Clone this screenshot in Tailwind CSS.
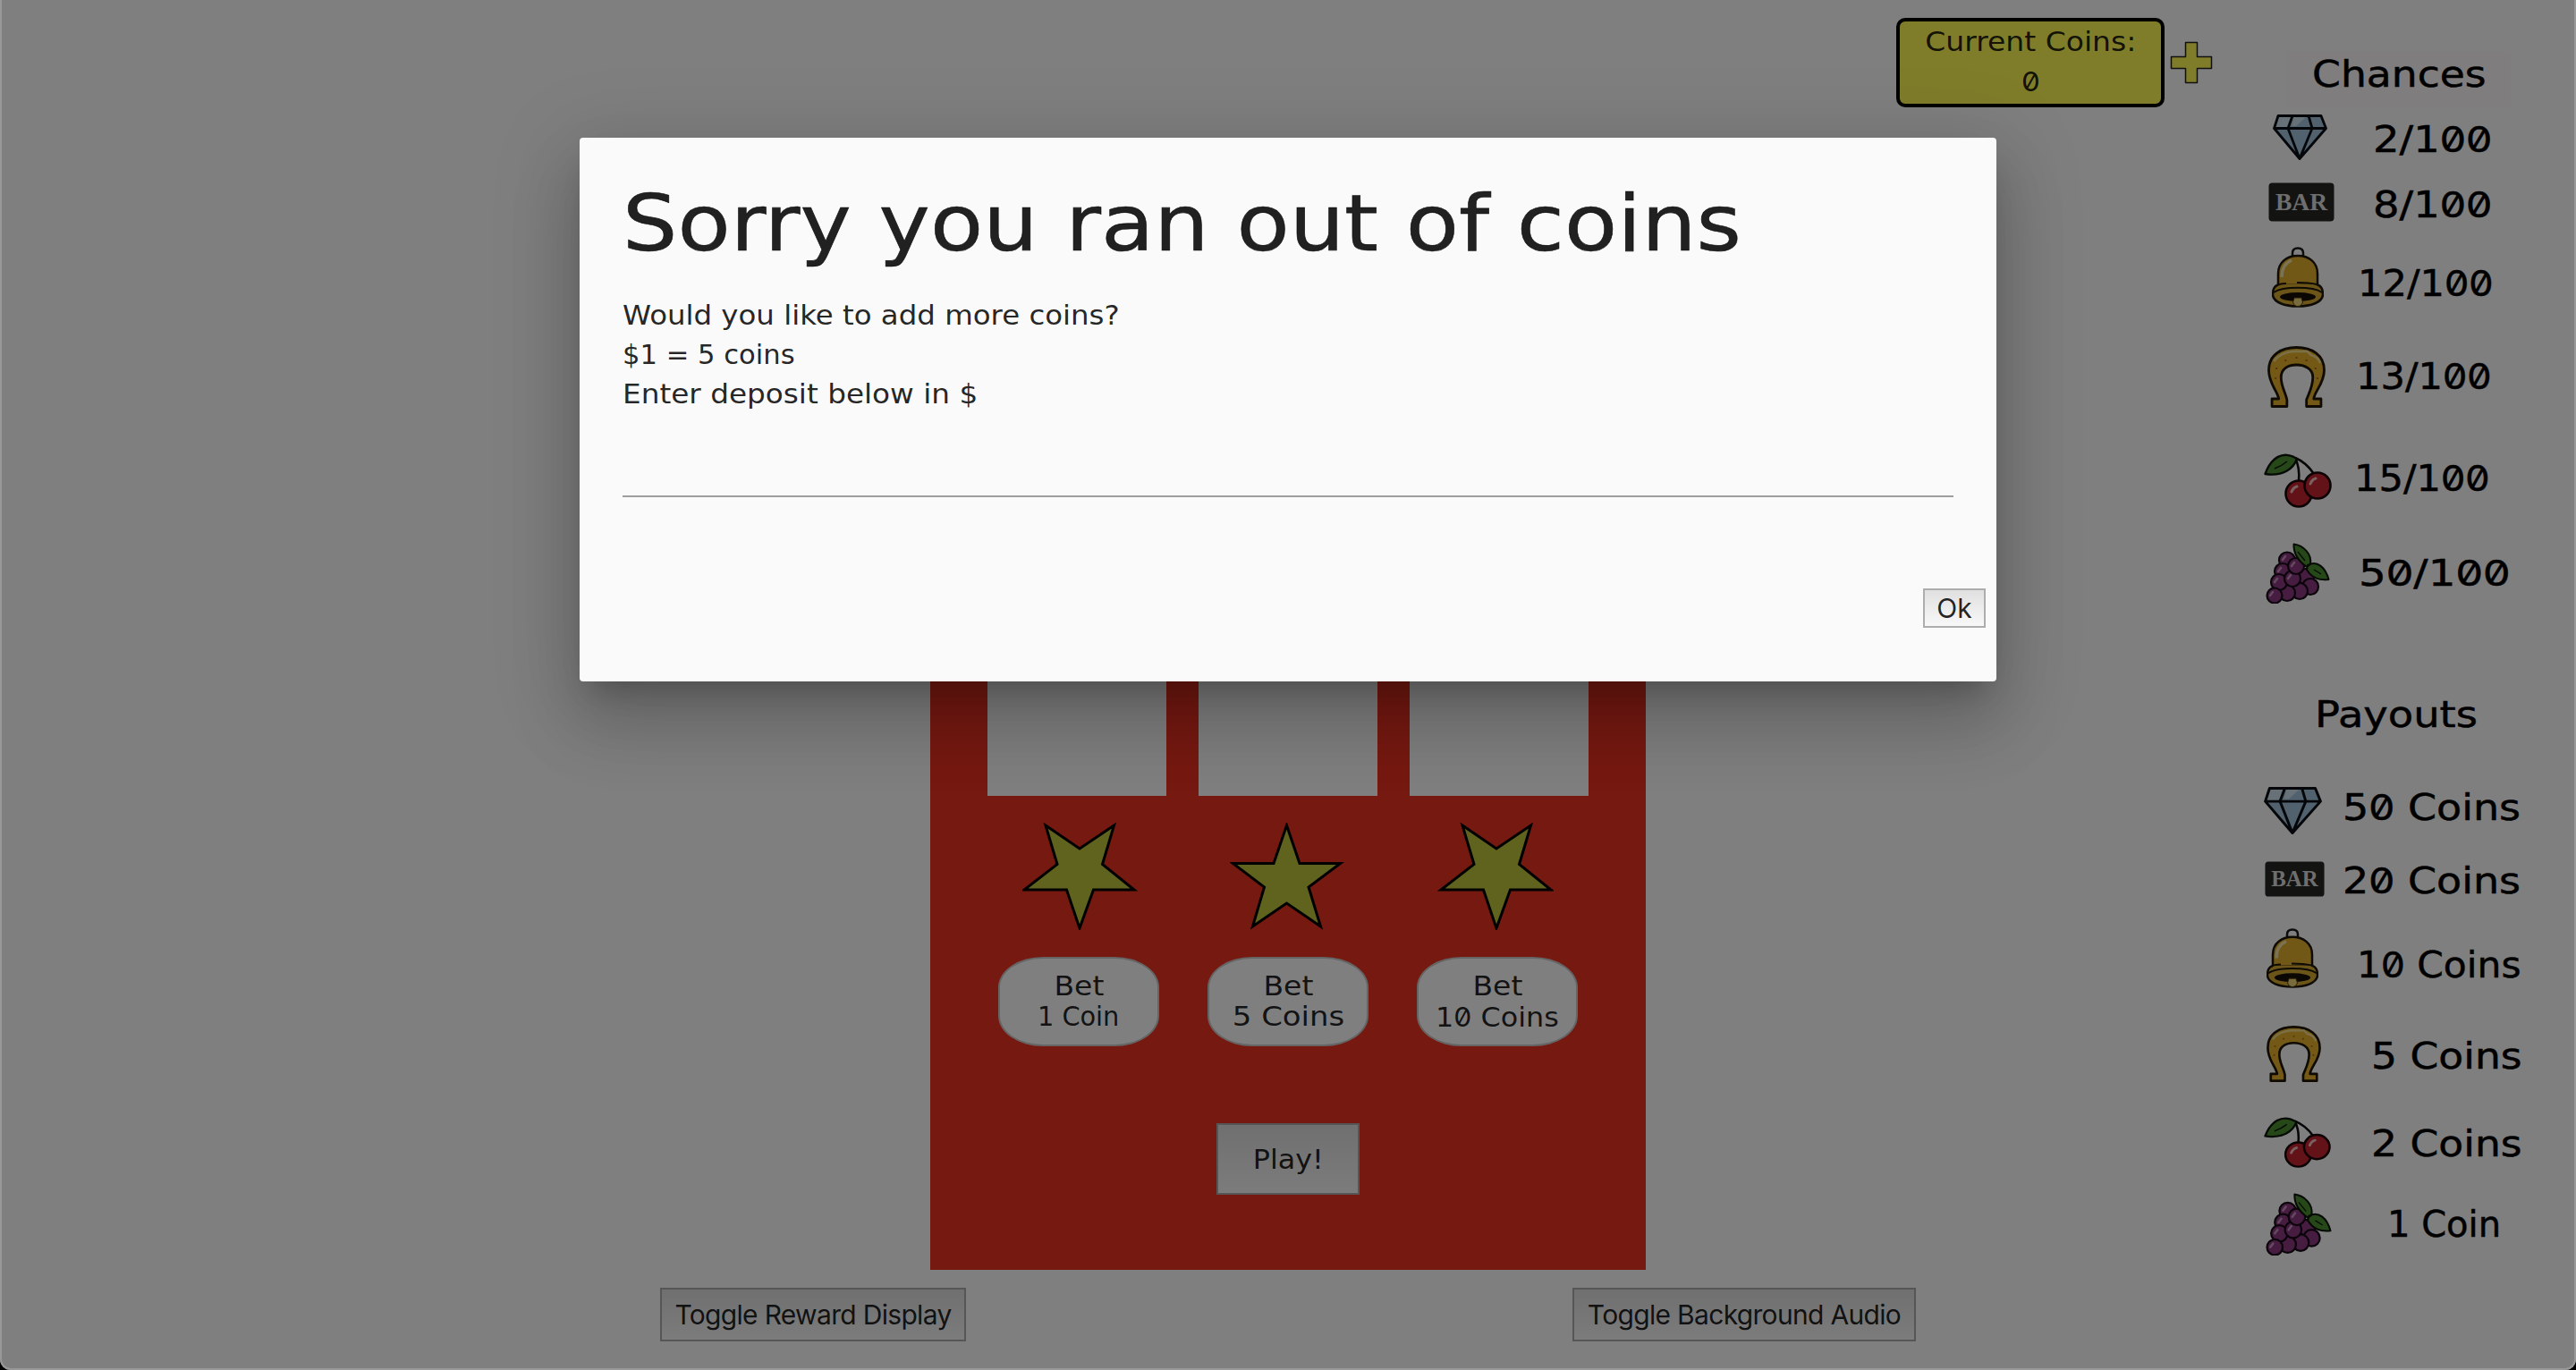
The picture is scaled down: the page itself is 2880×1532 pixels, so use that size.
<!DOCTYPE html>
<html lang="en">
<head>
<meta charset="utf-8">
<title>Slot Machine</title>
<script src="https://cdn.jsdelivr.net/npm/@tailwindcss/browser@4"></script>
</head>
<body class="bg-black">
<svg class="hidden">
  <symbol id="diamond" viewBox="0 0 61 51" preserveAspectRatio="none">
    <path d="M6 1.500H54L59.500 15.500 30 49.500 1.500 15.500Z" fill="#a3c3db"/>
    <path d="M6 2H22L17 15H2ZM24 2H38L26 13H21Z" fill="#cfe2ee"/>
    <path d="M6 1.500H54L59.500 15.500 30 49.500 1.500 15.500ZM1.500 15.500H59.500M22 1.500L17 15.500 30 49.500 44 15.500 40 1.500" fill="none" stroke="#080d12" stroke-width="2.800" stroke-linejoin="round"/>
  </symbol>
  <symbol id="bar" viewBox="0 0 74 44" preserveAspectRatio="none">
    <rect x=".5" y=".5" width="73" height="43" rx="4" fill="#262624"/>
    <text x="8" y="31" font-family="Liberation Serif, serif" font-weight="700" font-size="27" textLength="58" lengthAdjust="spacingAndGlyphs" fill="#dcdcdc">BAR</text>
  </symbol>
  <symbol id="bell" viewBox="0 0 58 68" preserveAspectRatio="none">
    <path d="M23 11V7Q23 1.500 29 1.500T35 7V11" fill="none" stroke="#1c1a1c" stroke-width="2.500"/>
    <path d="M7 43V30C7 17 17 10 29 10S51 17 51 30V43Z" fill="#e2b02c" stroke="#1c1408" stroke-width="2.500"/>
    <path d="M11 34C11 24 15 18 22 15" fill="none" stroke="#f7e7a6" stroke-width="3.500"/>
    <path d="M8 42C2 44 1 48 1 54C2 62 14 66.500 29 66.500S56 62 57 54C57 48 56 44 50 42" fill="#d9ab30" stroke="#1c1408" stroke-width="2.500"/>
    <path d="M8 42C12 41 13 41 16 41M28 40Q42 40 50 42M2 51C12 44 46 44 56 51" fill="none" stroke="#1c1408" stroke-width="2"/>
    <ellipse cx="29" cy="56" rx="20" ry="5" fill="#170f04"/>
    <path d="M25 57H33L34.500 62Q33 66.500 29 66.500T23.500 62Z" fill="#f1d67a" stroke="#4a370a" stroke-width="1"/>
  </symbol>
  <symbol id="shoe" viewBox="0 0 64 69" preserveAspectRatio="none">
    <path d="M5 59H12.500C11 50 1.500 42 1.500 27C1.500 10 15 1.500 32 1.500S62.500 10 62.500 27C62.500 42 52 50 51 59H59V67.500H43V60C46 52 50 45 50 35C50 26 42 21 32 21S15 26 15 35C15 45 20 52 21.500 60V67.500H5Z" fill="#e6b32a" stroke="#1f1606" stroke-width="2.800" stroke-linejoin="round"/>
    <path d="M7 17Q14 7 29 6H44L48 10Q56 12 58 19" fill="none" stroke="#f6df8e" stroke-width="2.500"/>
    <path d="M20 15V17M32 12V14M43 15V17M10 24V26M53 24V26M8 36H10M54 36H56" stroke="#b06a1c" stroke-width="2"/>
  </symbol>
  <symbol id="cherry" viewBox="0 0 76 62" preserveAspectRatio="none">
    <path d="M35 6C38 12 40 22 39 32M35 6C45 10 52 18 56 24" fill="none" stroke="#0d0d0d" stroke-width="2.600"/>
    <path d="M1.500 24C7 8 20-4 37 7C33 18 22 27 1.500 24Z" fill="#4d8f2e" stroke="#0d140a" stroke-width="2.400" stroke-linejoin="round"/>
    <path d="M12 18Q20 15 26 10" fill="none" stroke="#0d140a" stroke-width="1.500"/>
    <circle cx="39" cy="46" r="14.500" fill="#c62430" stroke="#190506" stroke-width="2.600"/>
    <circle cx="60" cy="37" r="14.500" fill="#c62430" stroke="#190506" stroke-width="2.600"/>
    <path d="M31 44Q33 39 37 38M52 35Q54 30 58 29" fill="none" stroke="#f3c2c4" stroke-width="3" stroke-linecap="round"/>
  </symbol>
  <symbol id="grapes" viewBox="0 0 72 68" preserveAspectRatio="none">
    <g fill="#8c3a80" stroke="#160a16" stroke-width="2.200">
      <circle cx="45" cy="38" r="9"/><circle cx="50" cy="49" r="9"/><circle cx="24" cy="19.500" r="9"/><circle cx="38" cy="54" r="9"/><circle cx="24" cy="56" r="9"/><circle cx="19" cy="32" r="9"/><circle cx="15" cy="44" r="9"/><circle cx="10" cy="59" r="8.500"/><circle cx="30" cy="40" r="9"/><circle cx="34" cy="26" r="9"/>
    </g>
    <g fill="none" stroke="#c993c0" stroke-width="2.500" stroke-linecap="round">
      <path d="M19 19L22 15M29 26L32 22M14 32L17 28M10 44L13 40M25 40L28 36M5 59L8 55"/>
    </g>
    <path d="M31.500 1.500C42 3 52 12 50 24L46 27C36 20 31 12 31.500 1.500ZM47 25C58 19 67 28 70.500 41C60 42 52 40 46 30Z" fill="#4d8f2e" stroke="#0d140a" stroke-width="2" stroke-linejoin="round"/>
    <path d="M36 10L44 20M54 30L62 35" stroke="#0d140a" stroke-width="1.300"/>
  </symbol>
</svg>

<div class="relative flex h-[1532px] w-[2880px] overflow-hidden rounded-b-[12px] bg-white font-['DejaVu_Sans',sans-serif] text-black/87">
  <main class="flex w-[2142px] shrink-0 flex-col pt-[180px] pl-[738px]">
    <section class="mx-auto flex h-[1240px] w-[800px] flex-col items-center bg-[#ec3222]">
      <div class="flex gap-9 pt-[310px]">
        <div class="h-[400px] w-[200px] bg-white"></div>
        <div class="h-[400px] w-[200px] bg-white"></div>
        <div class="h-[400px] w-[200px] bg-white"></div>
      </div>
      <div class="mt-[30px] flex gap-[102px]">
        <svg class="h-[120px] w-[130px]" viewBox="0 0 130 120"><path d="M26 3L64 29 102.500 3 89.500 46.500 125 75H79.500L64 118 49.500 75H2L39 46.500Z" fill="#bec63c" stroke="#000" stroke-width="3"/></svg>
        <svg class="h-[120px] w-[130px]" viewBox="0 0 130 120"><path d="M63.500 3L78 45.500H123.500L88 72 101.500 116 63.500 90 25.500 116 38.500 72 3.500 45.500H49Z" fill="#bec63c" stroke="#000" stroke-width="3"/></svg>
        <svg class="h-[120px] w-[130px]" viewBox="0 0 130 120"><path d="M28 3L66 29 104.500 3 91.500 46.500 127 75H81.500L66 118 51.500 75H4L41 46.500Z" fill="#bec63c" stroke="#000" stroke-width="3"/></svg>
      </div>
      <div class="mt-[30px] flex gap-[54px] text-[30px] leading-[34px]">
        <button class="flex h-[100px] w-[180px] flex-col items-center justify-center rounded-[50px/34px] border-2 border-[#cacaca] bg-white"><span class="scale-x-110">Bet</span><span class="scale-x-96">1 Coin</span></button>
        <button class="flex h-[100px] w-[180px] flex-col items-center justify-center rounded-[50px/34px] border-2 border-[#cacaca] bg-white"><span class="scale-x-110">Bet</span><span class="scale-x-113">5 Coins</span></button>
        <button class="flex h-[100px] w-[180px] flex-col items-center justify-center rounded-[50px/34px] border-2 border-[#cacaca] bg-white"><span class="scale-x-110">Bet</span><span class="scale-x-106 whitespace-nowrap">1<span class="font-['Inter'] slashed-zero">0</span> Coins</span></button>
      </div>
      <button class="mt-[86px] h-[80px] w-[160px] border-2 border-[#adadad] bg-linear-to-b from-[#e0e0e0] to-[#f8f8f8] text-[30px]"><span class="inline-block scale-x-106">Play!</span></button>
    </section>
    <div class="mt-5 flex justify-between font-['Inter',sans-serif] text-[30px] tracking-[-0.680px]">
      <button class="h-[60px] w-[342px] border-2 border-[#adadad] bg-linear-to-b from-[#e0e0e0] to-[#f8f8f8]">Toggle Reward Display</button>
      <button class="h-[60px] w-[384px] border-2 border-[#adadad] bg-linear-to-b from-[#e0e0e0] to-[#f8f8f8]">Toggle Background Audio</button>
    </div>
  </main>

  <div class="-ml-[22px] flex w-[410px] shrink-0 items-start gap-[6px] pt-5">
    <div class="h-[100px] w-[300px] rounded-[10px] border-4 border-black bg-[#fffa54] pt-px text-center text-[30px] leading-[44px]"><span class="inline-block scale-x-110">Current Coins:</span><br><span class="inline-block scale-x-110 font-['Inter'] slashed-zero">0</span></div>
    <svg class="mt-[26px] h-[48px] w-[48px]" viewBox="0 0 48 48"><path d="M17.500 1.500H30.500V17.500H46.500V30.500H30.500V46.500H17.500V30.500H1.500V17.500H17.500Z" fill="#fffa54" stroke="#222" stroke-width="1.500" stroke-linejoin="round"/></svg>
  </div>

  <aside class="flex w-[350px] flex-col pt-[58px] text-[40px] leading-[50px] text-black [-webkit-text-stroke:0.5px_black]">
    <h2 class="ml-[27px] flex h-[61px] w-[250px] items-start justify-center bg-[#fffbfb]"><span class="scale-x-114">Chances</span></h2>
    <div class="flex h-[73px] items-center"><svg class="mb-1 ml-[11px] h-[51px] w-[61px]"><use href="#diamond"/></svg><span class="ml-[51px] origin-left scale-x-116">2/1<span class="font-['Inter'] slashed-zero">00</span></span></div>
    <div class="flex h-[74px] items-center"><svg class="mb-1.5 ml-[6px] h-[44px] w-[74px]"><use href="#bar"/></svg><span class="ml-[43px] origin-left scale-x-116">8/1<span class="font-['Inter'] slashed-zero">00</span></span></div>
    <div class="flex h-[102px] items-center"><svg class="mb-3.5 ml-[10px] h-[68px] w-[58px]"><use href="#bell"/></svg><span class="ml-[38px] origin-left scale-x-108">12/1<span class="font-['Inter'] slashed-zero">00</span></span></div>
    <div class="flex h-[106px] items-center"><svg class="ml-[5px] h-[69px] w-[65px]"><use href="#shoe"/></svg><span class="ml-[34px] origin-left scale-x-108">13/1<span class="font-['Inter'] slashed-zero">00</span></span></div>
    <div class="flex h-[122px] items-center"><svg class="mt-1 ml-[1px] h-[62px] w-[76px]"><use href="#cherry"/></svg><span class="ml-[25px] origin-left scale-x-108">15/1<span class="font-['Inter'] slashed-zero">00</span></span></div>
    <div class="flex h-[90px] items-center"><svg class="ml-[3px] h-[68px] w-[72px]"><use href="#grapes"/></svg><span class="ml-[32px] origin-left scale-x-121">5<span class="font-['Inter'] slashed-zero">0</span>/1<span class="font-['Inter'] slashed-zero">00</span></span></div>
    <h2 class="mt-[38px] ml-[58px] flex h-[150px] items-center"><span class="origin-left scale-x-116">Payouts</span></h2>
    <div class="flex h-[57px] items-center"><svg class="mt-2 ml-[1px] h-[53px] w-[65px]"><use href="#diamond"/></svg><span class="ml-[23px] origin-left scale-x-115">5<span class="font-['Inter'] slashed-zero">0</span> Coins</span></div>
    <div class="flex h-[107px] items-center"><svg class="mb-1 ml-[2px] h-[40px] w-[67px]"><use href="#bar"/></svg><span class="ml-[20px] origin-left scale-x-115">2<span class="font-['Inter'] slashed-zero">0</span> Coins</span></div>
    <div class="flex h-[81px] items-center"><svg class="mb-3.5 ml-[4px] h-[67px] w-[58px]"><use href="#bell"/></svg><span class="ml-[43px] origin-left scale-x-106">1<span class="font-['Inter'] slashed-zero">0</span> Coins</span></div>
    <div class="flex h-[124px] items-center"><svg class="mb-1.5 ml-[4px] h-[63px] w-[61px]"><use href="#shoe"/></svg><span class="ml-[56px] origin-left scale-x-114">5 Coins</span></div>
    <div class="flex h-[71px] items-center"><svg class="mb-1 ml-[1px] h-[58px] w-[75px]"><use href="#cherry"/></svg><span class="ml-[45px] origin-left scale-x-114">2 Coins</span></div>
    <div class="flex h-[110px] items-center"><svg class="ml-[3px] h-[70px] w-[74px]"><use href="#grapes"/></svg><span class="ml-[62px]">1 Coin</span></div>
  </aside>

  <div class="absolute inset-0 flex items-start justify-center bg-black/50 pt-[154px]">
    <div class="flex h-[608px] w-[1584px] flex-col rounded-[4px] bg-[#fafafa] px-12 shadow-[0_48px_76px_6px_rgba(0,0,0,0.14),0_18px_92px_16px_rgba(0,0,0,0.12),0_22px_30px_-14px_rgba(0,0,0,0.2)]">
      <h1 class="mt-[47px] origin-left scale-x-110 self-start text-[88px] leading-[97px] whitespace-nowrap [-webkit-text-stroke:0.6px]">Sorry you ran out of coins</h1>
      <div class="mt-[33px] flex flex-col items-start text-[30px] leading-[44px]">
        <p class="origin-left scale-x-108">Would you like to add more coins?</p>
        <p class="origin-left scale-x-102">$1 = 5 coins</p>
        <p class="origin-left scale-x-109">Enter deposit below in $</p>
      </div>
      <div class="mt-[91px] h-0.5 shrink-0 bg-[#9e9e9e]"></div>
      <button class="mt-[102px] -mr-9 h-11 w-[70px] shrink-0 self-end border-2 border-[#adadad] bg-linear-to-b from-[#e0e0e0] to-[#f8f8f8] font-['Inter',sans-serif] text-[30px] leading-10">Ok</button>
    </div>
  </div>
  <div class="pointer-events-none absolute inset-0 rounded-b-[12px] border-x-2 border-b-2 border-[#989898]"></div>
</div>
</body>
</html>
